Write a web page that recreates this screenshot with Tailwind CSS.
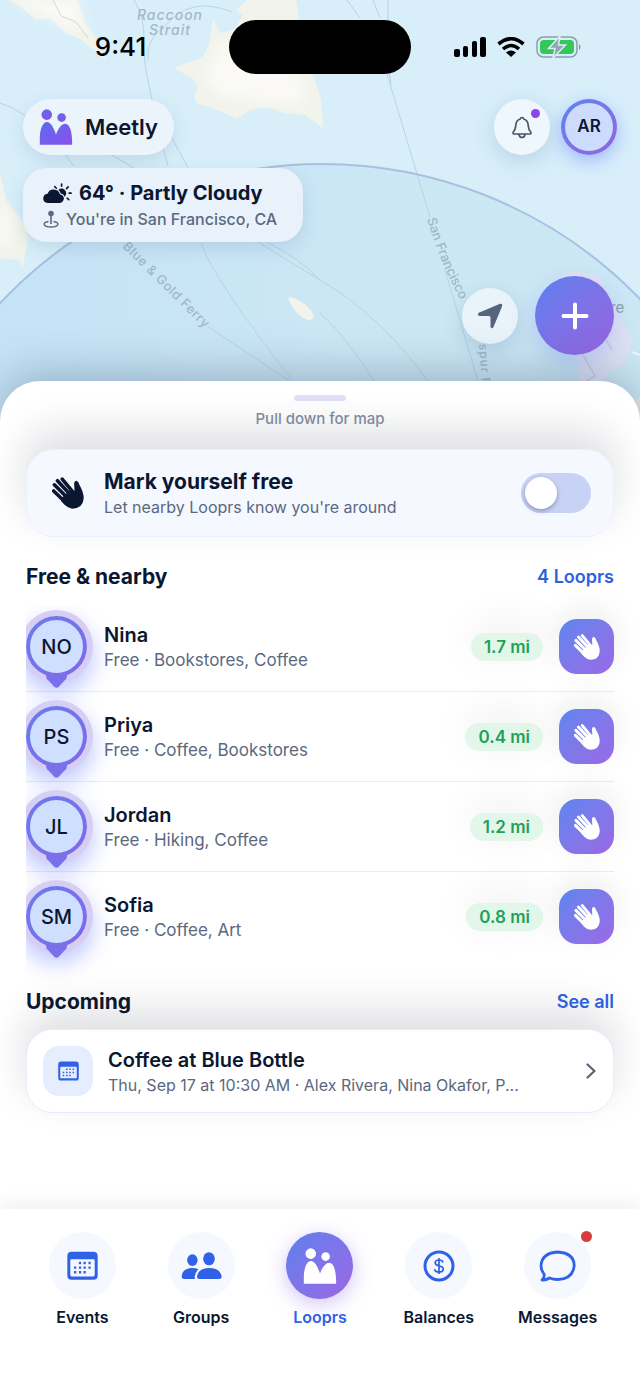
<!DOCTYPE html>
<html lang="en">
<head>
<meta charset="utf-8">
<meta name="viewport" content="width=device-width, initial-scale=1">
<title>Meetly</title>
<script src="https://cdn.jsdelivr.net/npm/@tailwindcss/browser@4"></script>
</head>
<body class="bg-white font-['Inter',sans-serif] text-[#0b1630] antialiased">

<!-- Shared icons -->
<svg class="absolute size-0" aria-hidden="true">
  <defs>
    <linearGradient id="brand" x1="0" y1="0" x2="1" y2="1">
      <stop offset="0" stop-color="#5b6cf0"/><stop offset="1" stop-color="#8b50ea"/>
    </linearGradient>
    <symbol id="people" viewBox="118 328 100 109">
      <circle cx="140" cy="345" r="16"/><circle cx="185" cy="354" r="13"/>
      <path d="M119 436V412C120 385 130 367 140 367C153 367 161 385 168 405C176 385 186 373 196 373C210 374 217 395 217 436Z"/>
    </symbol>
    <symbol id="wave" viewBox="96 20 94 94">
      <path d="M151 57L158 64Q163 62 162 56L161 39Q162 30 168 31Q174 33 176 42Q190 66 189 84Q186 113 155 113Q143 112 132 101L122 90L128 78Z"/>
      <path d="M126 26L156 62M112 31L148 70M103 43L139 79M101 61L130 89" fill="none" stroke="currentColor" stroke-width="10.500" stroke-linecap="round"/>
    </symbol>
    <symbol id="calendar" viewBox="200 154 94 86">
      <path fill-rule="evenodd" d="M214 155H280Q293 155 293 168V227Q293 240 280 240H214Q201 240 201 227V168Q201 155 214 155ZM214 178Q210 178 210 182V226Q210 230 214 230H280Q284 230 284 226V182Q284 178 280 178Z"/>
      <path d="M236 186h7v7h-7zM250 186h7v7h-7zM265 186h7v7h-7zM221 200h7v7h-7zM236 200h7v7h-7zM250 200h7v7h-7zM265 200h7v7h-7zM221 214h7v7h-7zM236 214h7v7h-7zM250 214h7v7h-7z"/>
    </symbol>
  </defs>
</svg>

<div class="relative flex min-h-screen flex-col overflow-hidden">

  <!-- Map -->
  <svg class="absolute inset-x-0 top-0 h-[440px] w-full" viewBox="0 0 640 440" preserveAspectRatio="xMidYMin slice" aria-hidden="true">
    <defs>
      <linearGradient id="range" x1="0" y1="0" x2="1" y2="0">
        <stop offset="0" stop-color="#c3e2f6"/><stop offset=".5" stop-color="#cbe7f5"/><stop offset="1" stop-color="#cde8f4"/>
      </linearGradient>
      <filter id="soft" x="-50%" y="-50%" width="200%" height="200%"><feGaussianBlur stdDeviation="6"/></filter>
    </defs>
    <rect width="640" height="440" fill="#d8effa"/>
    <circle cx="322" cy="606" r="442" fill="url(#range)"/>
    <g fill="#f2f4eb">
      <path d="M9 0H78L84 22L92 32L98 42L107 61L96 52L80 39L66 33L50 18L36 20L22 8Z"/>
      <path d="M213 20L221 33L234 30L243 15L236 10L247 0H296L298 12L300 24L310 60L315 80L321 100L323 128L305 115L284 113L268 107L250 110L237 119L222 112L208 107L197 104L194 96L198 88L192 78L174 68L184 64L202 58L209 45Z"/>
      <path d="M0 172L6 200L26 226L28 240L25 254L23 268L20 260L0 258Z"/>
      <path d="M288 298Q292 296 300 301Q311 308 314 316Q312 322 305 319Q292 311 288 298Z"/>
    </g>
    <g fill="#faf9f6" filter="url(#soft)">
      <path d="M16 0H76L86 30L62 24Z"/><path d="M222 42L260 52L306 84L300 104L250 100L220 95L205 78Z"/><path d="M0 200L14 225L10 245L0 246Z"/>
    </g>
    <path d="M554 280L574 270L600 277L612 305L632 338L626 362L610 372L600 382H580L576 350Z" fill="#dfe3f4"/>
    <path d="M583 355L595 376L582 384M606 340L612 350" fill="none" stroke="#c9cde2" stroke-width="1.5"/>
    <path d="M632 352L640 355" fill="none" stroke="#eef4fa" stroke-width="2"/>
    <path d="M636 400L640 396V440H636Z" fill="#e6e9e4"/>
    <g fill="none" stroke="#b9d3e1" stroke-width="1">
      <path d="M134 0Q145 18 144 42Q143 60 150 90Q160 140 168 166M232 12Q190 -5 165 26Q145 40 148 60M0 103Q14 107 24 115Q50 134 74 166M110 154L134 168M172 138L188 168M201 243Q214 280 293 381M207 326L290 381M258 242Q300 268 320 280Q380 315 428 381M320 313Q345 335 374 381M266 242Q300 258 320 280M347 0L360 18M373 0L380 18M388 0V60L391 85M387 74L430 217M445 270L478 381"/>
      <path d="M53 0L61 16L76 22L88 38" stroke="#d9d5d8"/>
    </g>
    <circle cx="322" cy="606" r="442" fill="none" stroke="#a9bfe2" stroke-width="2"/>
    <g font-family="Inter, sans-serif" font-weight="500" fill="#a3b7c6">
      <text x="170" y="20" text-anchor="middle" font-size="14" font-style="italic" letter-spacing="1">Raccoon</text>
      <text x="170" y="35" text-anchor="middle" font-size="14" font-style="italic" letter-spacing="1">Strait</text>
      <path id="ferry" d="M122 247L214 338" fill="none"/>
      <text font-size="13" letter-spacing="0.5"><textPath href="#ferry">Blue &amp; Gold Ferry</textPath></text>
      <path id="route" d="M427 219Q440 262 462 303Q478 330 481 400" fill="none"/>
      <text font-size="13"><textPath href="#route">San Francisco</textPath></text>
      <path id="spur" d="M479 344L483 400" fill="none"/>
      <text font-size="12" letter-spacing="1"><textPath href="#spur">spur F</textPath></text>
      <text x="610" y="313" font-size="15" fill="#93a3b4">re</text>
    </g>
  </svg>

  <header class="relative flex h-[381px] flex-col">
    <!-- Status bar -->
    <div class="mt-5 grid h-[54px] grid-cols-[1fr_182px_1fr] items-center text-black">
      <time class="pl-3 text-center text-[26px] leading-8 font-medium">9:41</time>
      <div class="h-[54px] rounded-full bg-black"></div>
      <div class="flex items-center justify-center gap-[11px] pr-4">
        <svg class="h-5 w-8" viewBox="0 0 32 20" role="img" aria-label="Signal"><rect x="0" y="12" width="6" height="8" rx="2"/><rect x="9" y="9" width="5" height="11" rx="2"/><rect x="18" y="4" width="5" height="16" rx="2"/><rect x="26" y="0" width="6" height="20" rx="2"/></svg>
        <svg class="h-5 w-7" viewBox="0 0 28 20" fill="none" stroke="#000" stroke-width="3.6" role="img" aria-label="Wi-Fi"><path d="M1.5 7Q14 -3.5 26.500 7M6 12Q14 5 22 12"/><path d="M9 15.500Q14 11.500 19 15.500L14 20Z" fill="#000" stroke="none"/></svg>
        <svg class="h-[22px] w-[46px]" viewBox="0 0 46 22" role="img" aria-label="Battery charging"><rect x="1" y="1" width="40" height="20" rx="6.500" fill="none" stroke="#8ca0a8" stroke-width="1.500"/><rect x="4" y="4" width="34" height="14" rx="4" fill="#34c759"/><path d="M43 8Q46 11 43 14Z" fill="#7f9299"/><path d="M24 0L12.500 12.500H19L17 22L29.500 9H22.500Z" fill="#93a6ab" stroke="#d8effa" stroke-width="1.500"/></svg>
      </div>
    </div>

    <div class="mt-[25px] flex items-center justify-between px-[23px]">
      <a href="#" class="flex h-14 items-center gap-3 rounded-full bg-[#ebf4fb] px-4 text-[22px] font-semibold shadow-[0_6px_18px_rgba(60,100,140,0.16)]">
        <svg class="h-9 w-[34px]" fill="url(#brand)" aria-hidden="true"><use href="#people"/></svg>
        Meetly
      </a>
      <div class="flex items-center gap-[11px]">
        <button class="relative flex size-14 items-center justify-center rounded-full bg-[#eff7fc] shadow-[0_6px_22px_rgba(60,100,140,0.2)]" aria-label="Notifications">
          <svg class="size-6" viewBox="0 0 24 24" fill="none" stroke="#475569" stroke-width="1.700" stroke-linejoin="round" stroke-linecap="round"><path d="M12 2.500Q10.500 2.500 10.300 4Q6 5 5.700 11Q5.500 14.500 3.300 17Q2.500 19 4 19H20Q21.500 19 20.700 17Q18.500 14.500 18.300 11Q18 5 13.700 4Q13.500 2.500 12 2.500ZM9 19.500Q9.500 22.500 12 22.500Q14.500 22.500 15 19.500"/></svg>
          <span class="absolute top-[10px] right-[10px] size-[9px] rounded-full bg-[#8b46e8]"></span>
        </button>
        <button class="flex size-14 items-center justify-center rounded-full bg-linear-135 from-[#5b86ec] to-[#8f62e6] p-1 shadow-[0_6px_18px_rgba(80,110,255,0.42)]" aria-label="Profile">
          <span class="flex size-full items-center justify-center rounded-full bg-[#cddcfd] text-[17px] font-semibold">AR</span>
        </button>
      </div>
    </div>

    <section class="mt-[13px] ml-[23px] flex h-[74px] w-[280px] flex-col justify-center gap-px rounded-3xl bg-[#e9f2fa] pl-5 shadow-[0_6px_18px_rgba(60,100,140,0.16)]">
      <p class="flex items-center gap-[7px] text-[20px] leading-[26px] font-bold whitespace-nowrap">
        <svg class="h-5 w-[29px] shrink-0" viewBox="130 546 87 61" aria-hidden="true"><circle cx="186" cy="577" r="14" fill="#0b1630"/><path d="M186 549v7M206 558l-5 5M209 577h6M203 592l5 5M165 557l5 5" stroke="#0b1630" stroke-width="5" stroke-linecap="round"/><path d="M146 607Q130 606 130 593Q131 580 143 579Q148 565 163 566Q177 567 181 580Q194 583 193 595Q190 606 181 607Z" fill="#0b1630" stroke="#e9f2fa" stroke-width="6" paint-order="stroke"/></svg>
        <span>64° · Partly Cloudy</span>
      </p>
      <p class="flex items-center gap-[7px] text-[16px] leading-[24px] font-medium whitespace-nowrap text-[#5b6880]">
        <svg class="h-[18px] w-4 shrink-0" viewBox="0 0 16 18" fill="none" stroke="#5b6880" stroke-width="1.300" aria-hidden="true"><circle cx="8" cy="3.500" r="2.800" fill="#5b6880" stroke="none"/><path d="M8 6V14" stroke-width="1.600"/><path d="M5.500 11.500Q1 12.300 1 14.200Q2 17 8 17Q14 17 15 14.200Q15 12.300 10.500 11.500"/></svg>
        <span>You're in San Francisco, CA</span>
      </p>
    </section>

    <div class="mt-[34px] flex items-center justify-end gap-[17px] pr-[26px]">
      <button class="flex size-14 items-center justify-center rounded-full bg-[#e9f3fa] shadow-[0_6px_20px_rgba(60,100,140,0.2)]" aria-label="Center on my location">
        <svg class="size-[26px]" viewBox="0 0 26 26"><path d="M22.500 1Q26 0 25 3.500L16.500 24Q15 26.500 13.500 24V14.500Q13.500 13 12 13H2.500Q-.5 12 1.800 9.800Z" fill="#56657f"/></svg>
      </button>
      <button class="flex size-[79px] items-center justify-center rounded-full bg-linear-135 from-[#5b80ef] to-[#9662df] shadow-[0_8px_24px_rgba(90,120,240,0.28)]" aria-label="Create">
        <svg class="size-7" viewBox="0 0 28 28" stroke="#fff" stroke-width="4" stroke-linecap="round"><path d="M14 2.500V25.500M2.500 14H25.500"/></svg>
      </button>
    </div>
  </header>

  <!-- Sheet -->
  <main class="relative flex flex-1 flex-col overflow-clip rounded-t-[40px] bg-white px-[26px] shadow-[0_-8px_44px_rgba(60,80,110,0.34)]">
    <div class="flex flex-col items-center pt-[14px]">
      <span class="h-[6px] w-[52px] rounded-full bg-[#e0e0fa]"></span>
      <p class="relative z-10 mt-2 text-[15px] leading-5 font-medium text-[#7e899c]">Pull down for map</p>
    </div>

    <label class="mt-5 flex h-[88px] items-center rounded-[28px] border border-[#edf1fd] bg-[#f5f8ff] pr-[22px] pl-[25px] shadow-[0_-18px_42px_rgba(15,23,42,0.14)]">
      <svg class="size-8 shrink-0" fill="currentColor" aria-hidden="true"><use href="#wave"/></svg>
      <span class="flex flex-1 flex-col pl-5">
        <span class="text-[21px] leading-[27px] font-bold">Mark yourself free</span>
        <span class="text-[16px] leading-6 text-[#5b6880]">Let nearby Looprs know you're around</span>
      </span>
      <input type="checkbox" role="switch" class="flex h-10 w-[70px] appearance-none items-center rounded-full bg-[#c7d2f5] px-1 before:size-8 before:rounded-full before:bg-white before:shadow-[0_2px_4px_rgba(40,60,110,0.4)] checked:justify-end checked:bg-[#5b80ef]">
    </label>

    <div class="relative mt-6 flex items-center justify-between leading-8">
      <h2 class="text-[21px] font-bold">Free &amp; nearby</h2>
      <a href="#" class="text-[18px] font-semibold text-[#2f5fdd]">4 Looprs</a>
    </div>

    <ul class="mt-[9px] [&>li]:relative [&>li]:flex [&>li]:h-[90px] [&>li]:items-center [&>li]:border-b [&>li]:border-[#e8ebfb] [&>li:last-child]:border-transparent">
      <li>
        <span class="[clip-path:inset(-10px_-30px_-40px_0)]"><span class="relative flex size-[61px] items-center justify-center rounded-full bg-linear-135 from-[#6a7bec] to-[#8068ea] p-1 shadow-[0_0_0_6px_#d6cef3,0_10px_22px_6px_rgba(90,115,255,0.4)]"><svg class="absolute top-[57px] left-5 h-4 w-[21px]" viewBox="0 0 21 16"><path d="M0 0H21V3Q21 6 18.500 7.500L12.500 14Q10.500 15.500 8.500 14L2.500 7.500Q0 6 0 3Z" fill="#7a70ea"/></svg><span class="relative flex size-full items-center justify-center rounded-full bg-[#cfdfff] text-[20px] font-medium">NO</span></span></span>
        <div class="flex-1 pt-px pl-[17px]"><h3 class="text-[20px] leading-[26px] font-semibold">Nina</h3><p class="text-[17px] leading-6 text-[#5b6880]">Free · Bookstores, Coffee</p></div>
        <span class="mr-4 rounded-full bg-[#e2f7ea] px-[13px] text-[17px] leading-7 font-semibold text-[#22a05a] shadow-[0_-8px_40px_rgba(15,23,42,0.07)]">1.7 mi</span>
        <button class="flex size-[55px] items-center justify-center rounded-[18px] bg-linear-135 from-[#5b86ee] to-[#9a68e6] text-white shadow-[0_-8px_30px_rgba(15,23,42,0.08)]" aria-label="Wave to Nina"><svg class="size-[26px]" fill="currentColor"><use href="#wave"/></svg></button>
      </li>
      <li>
        <span class="[clip-path:inset(-10px_-30px_-40px_0)]"><span class="relative flex size-[61px] items-center justify-center rounded-full bg-linear-135 from-[#6a7bec] to-[#8068ea] p-1 shadow-[0_0_0_6px_#d6cef3,0_10px_22px_6px_rgba(90,115,255,0.4)]"><svg class="absolute top-[57px] left-5 h-4 w-[21px]" viewBox="0 0 21 16"><path d="M0 0H21V3Q21 6 18.500 7.500L12.500 14Q10.500 15.500 8.500 14L2.500 7.500Q0 6 0 3Z" fill="#7a70ea"/></svg><span class="relative flex size-full items-center justify-center rounded-full bg-[#cfdfff] text-[20px] font-medium">PS</span></span></span>
        <div class="flex-1 pt-px pl-[17px]"><h3 class="text-[20px] leading-[26px] font-semibold">Priya</h3><p class="text-[17px] leading-6 text-[#5b6880]">Free · Coffee, Bookstores</p></div>
        <span class="mr-4 rounded-full bg-[#e2f7ea] px-[13px] text-[17px] leading-7 font-semibold text-[#22a05a] shadow-[0_-8px_40px_rgba(15,23,42,0.07)]">0.4 mi</span>
        <button class="flex size-[55px] items-center justify-center rounded-[18px] bg-linear-135 from-[#5b86ee] to-[#9a68e6] text-white shadow-[0_-8px_30px_rgba(15,23,42,0.08)]" aria-label="Wave to Priya"><svg class="size-[26px]" fill="currentColor"><use href="#wave"/></svg></button>
      </li>
      <li>
        <span class="[clip-path:inset(-10px_-30px_-40px_0)]"><span class="relative flex size-[61px] items-center justify-center rounded-full bg-linear-135 from-[#6a7bec] to-[#8068ea] p-1 shadow-[0_0_0_6px_#d6cef3,0_10px_22px_6px_rgba(90,115,255,0.4)]"><svg class="absolute top-[57px] left-5 h-4 w-[21px]" viewBox="0 0 21 16"><path d="M0 0H21V3Q21 6 18.500 7.500L12.500 14Q10.500 15.500 8.500 14L2.500 7.500Q0 6 0 3Z" fill="#7a70ea"/></svg><span class="relative flex size-full items-center justify-center rounded-full bg-[#cfdfff] text-[20px] font-medium">JL</span></span></span>
        <div class="flex-1 pt-px pl-[17px]"><h3 class="text-[20px] leading-[26px] font-semibold">Jordan</h3><p class="text-[17px] leading-6 text-[#5b6880]">Free · Hiking, Coffee</p></div>
        <span class="mr-4 rounded-full bg-[#e2f7ea] px-[13px] text-[17px] leading-7 font-semibold text-[#22a05a] shadow-[0_-8px_40px_rgba(15,23,42,0.07)]">1.2 mi</span>
        <button class="flex size-[55px] items-center justify-center rounded-[18px] bg-linear-135 from-[#5b86ee] to-[#9a68e6] text-white shadow-[0_-8px_30px_rgba(15,23,42,0.08)]" aria-label="Wave to Jordan"><svg class="size-[26px]" fill="currentColor"><use href="#wave"/></svg></button>
      </li>
      <li>
        <span class="[clip-path:inset(-10px_-30px_-40px_0)]"><span class="relative flex size-[61px] items-center justify-center rounded-full bg-linear-135 from-[#6a7bec] to-[#8068ea] p-1 shadow-[0_0_0_6px_#d6cef3,0_10px_22px_6px_rgba(90,115,255,0.4)]"><svg class="absolute top-[57px] left-5 h-4 w-[21px]" viewBox="0 0 21 16"><path d="M0 0H21V3Q21 6 18.500 7.500L12.500 14Q10.500 15.500 8.500 14L2.500 7.500Q0 6 0 3Z" fill="#7a70ea"/></svg><span class="relative flex size-full items-center justify-center rounded-full bg-[#cfdfff] text-[20px] font-medium">SM</span></span></span>
        <div class="flex-1 pt-px pl-[17px]"><h3 class="text-[20px] leading-[26px] font-semibold">Sofia</h3><p class="text-[17px] leading-6 text-[#5b6880]">Free · Coffee, Art</p></div>
        <span class="mr-4 rounded-full bg-[#e2f7ea] px-[13px] text-[17px] leading-7 font-semibold text-[#22a05a] shadow-[0_-8px_40px_rgba(15,23,42,0.07)]">0.8 mi</span>
        <button class="flex size-[55px] items-center justify-center rounded-[18px] bg-linear-135 from-[#5b86ee] to-[#9a68e6] text-white shadow-[0_-8px_30px_rgba(15,23,42,0.08)]" aria-label="Wave to Sofia"><svg class="size-[26px]" fill="currentColor"><use href="#wave"/></svg></button>
      </li>
    </ul>

    <div class="relative z-10 mt-6 flex items-center justify-between leading-8">
      <h2 class="text-[21px] font-bold">Upcoming</h2>
      <a href="#" class="text-[18px] font-semibold text-[#2f5fdd]">See all</a>
    </div>

    <a href="#" class="mt-[11px] mb-24 flex h-[84px] items-center rounded-[26px] border border-[#e8ebfb] bg-white pr-[17px] pl-4 shadow-[0_-18px_42px_rgba(15,23,42,0.14)]">
      <span class="flex size-[50px] shrink-0 items-center justify-center rounded-2xl bg-[#e6edfe] text-[#2f62e6]"><svg class="h-5 w-[21px]" fill="currentColor" aria-hidden="true"><use href="#calendar"/></svg></span>
      <span class="flex min-w-0 flex-1 flex-col pt-px pl-[15px]">
        <span class="text-[20px] leading-[26px] font-semibold">Coffee at Blue Bottle</span>
        <span class="text-[16px] leading-6 text-[#5b6880]">Thu, Sep 17 at 10:30 AM · Alex Rivera, Nina Okafor, P...</span>
      </span>
      <svg class="h-4 w-[10px] shrink-0" viewBox="0 0 10 16" fill="none" stroke="#56627a" stroke-width="2.200" stroke-linecap="round" stroke-linejoin="round" aria-hidden="true"><path d="M1.500 1.500L8.500 8L1.500 14.500"/></svg>
    </a>
  </main>

  <!-- Tab bar -->
  <nav class="relative grid h-[182px] grid-cols-5 items-start bg-white px-[23px] pt-[23px] text-[16px] leading-6 font-semibold shadow-[0_-4px_20px_rgba(0,0,0,0.07)]">
    <a href="#" class="flex flex-col items-center gap-[6px]">
      <span class="flex size-[67px] items-center justify-center rounded-full bg-[#f5f8ff] text-[#2f62e6]"><svg class="h-[29px] w-[31px]" fill="currentColor"><use href="#calendar"/></svg></span>Events
    </a>
    <a href="#" class="flex flex-col items-center gap-[6px]">
      <span class="flex size-[67px] items-center justify-center rounded-full bg-[#f5f8ff] text-[#2f62e6]"><svg class="h-[27px] w-[41px]" viewBox="542 152 124 83" fill="currentColor"><ellipse cx="576" cy="177" rx="16" ry="18"/><ellipse cx="627" cy="173" rx="18" ry="20"/><path d="M595 205Q583 216 583 229Q583 233 585 235H551Q543 235 543 228Q545 202 575 201Q587 201 595 205ZM598 235Q590 235 590 229Q593 202 628 201Q663 202 666 229Q666 235 658 235Z"/></svg></span>Groups
    </a>
    <a href="#" class="flex flex-col items-center gap-[6px] text-[#2f62e6]" aria-current="page">
      <span class="flex size-[67px] items-center justify-center rounded-full bg-linear-135 from-[#5b80ee] to-[#9a66e4] text-white shadow-[0_5px_20px_rgba(120,90,230,0.35)]"><svg class="h-9 w-[34px]" fill="currentColor"><use href="#people"/></svg></span>Looprs
    </a>
    <a href="#" class="flex flex-col items-center gap-[6px]">
      <span class="flex size-[67px] items-center justify-center rounded-full bg-[#f5f8ff] text-[#2f62e6]"><svg class="size-8" viewBox="0 0 32 32" fill="none" stroke="currentColor" stroke-width="3"><circle cx="16" cy="16" r="14"/><path d="M20 12.500Q19.500 10 16 10Q12.200 10 12.200 12.700Q12.200 15 16 15.800Q20.300 16.700 20.300 19.300Q20 22 16 22Q12 22 11.600 19.200M16 8V24" stroke-width="1.700"/></svg></span>Balances
    </a>
    <a href="#" class="flex flex-col items-center gap-[6px]">
      <span class="relative flex size-[67px] items-center justify-center rounded-full bg-[#f5f8ff] text-[#2f62e6]"><svg class="h-8 w-[37px]" viewBox="0 0 37 32" fill="none" stroke="currentColor" stroke-width="2.800" stroke-linejoin="round"><path d="M18.500 2Q35 3 35.200 15.500Q34 29 19 29.500Q14 29.500 10.500 28Q7 30.300 3 30Q6 27 5 24Q2 20 2 15.500Q3 3 18.500 2Z"/></svg><span class="absolute -top-px -right-px size-[11px] rounded-full bg-[#d63c40]"></span></span>Messages
    </a>
  </nav>
</div>
</body>
</html>
